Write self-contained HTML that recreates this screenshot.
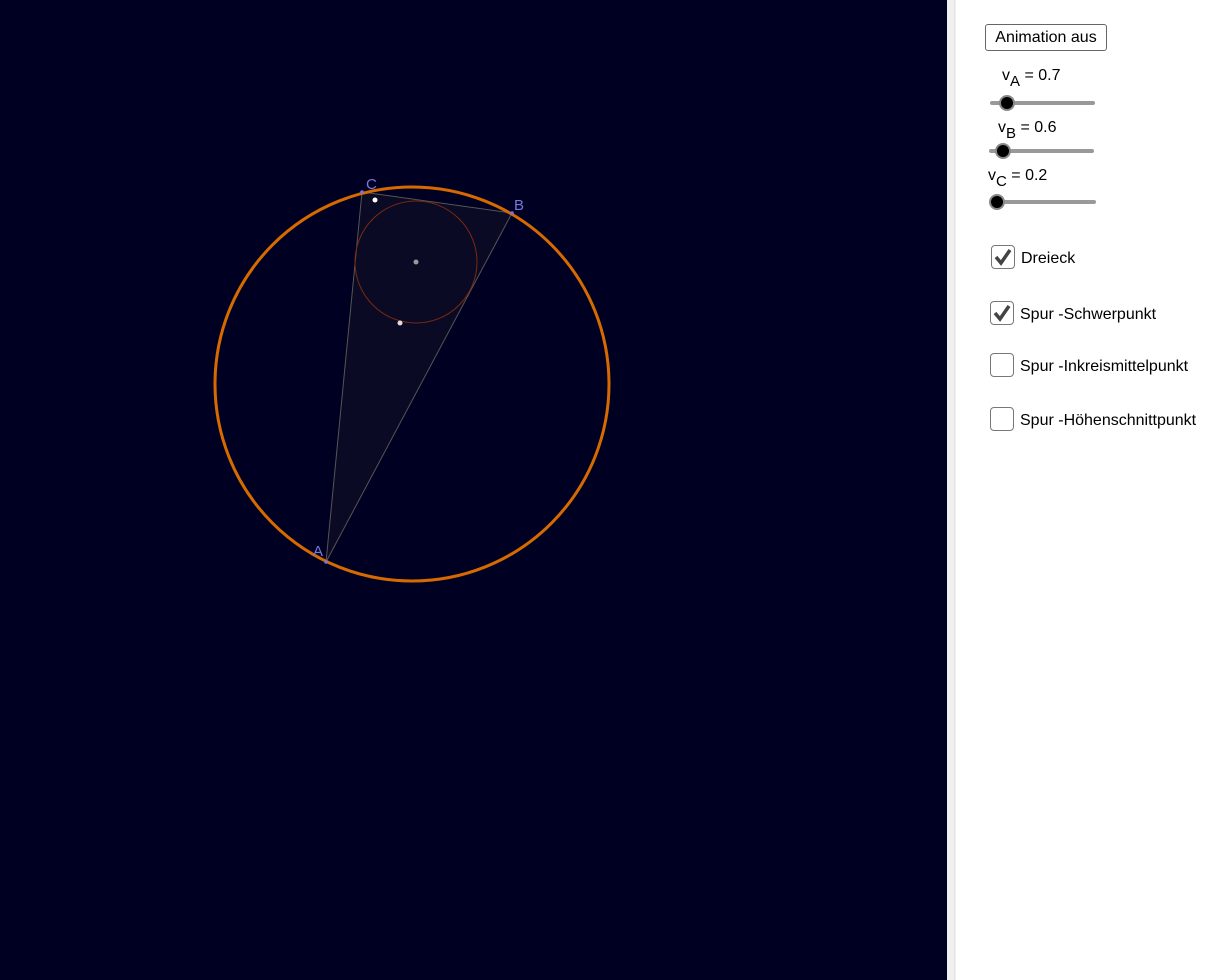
<!DOCTYPE html>
<html><head><style>
body{margin:0;width:1221px;height:980px;overflow:hidden;background:#fff;font-family:"Liberation Sans",sans-serif;position:relative}
.t{position:absolute;font-size:16px;color:#000;white-space:nowrap}
.cb{position:absolute;width:24px;height:24px;border:1.5px solid #777;border-radius:4px;box-sizing:border-box;background:#fff}
sub{font-size:15px;vertical-align:-6px;line-height:0}
</style></head><body>
<svg width="1221" height="980" style="position:absolute;left:0;top:0">
<rect x="0" y="0" width="947" height="980" fill="#000022"/>
<rect x="947" y="0" width="8" height="980" fill="#f0f0f0"/>
<line x1="955" y1="0" x2="955" y2="980" stroke="#ddd"/>
<polygon points="326,562 512,213 362,192" fill="#0a0a24" stroke="#555" stroke-width="1"/>
<circle cx="416" cy="262" r="61" fill="none" stroke="#7a2a10" stroke-width="1"/>
<circle cx="412" cy="384" r="197" fill="none" stroke="#d66a00" stroke-width="3"/>
<circle cx="375" cy="200" r="2.5" fill="#fff"/>
<circle cx="400" cy="323" r="2.5" fill="#ddd"/>
<circle cx="416" cy="262" r="2.5" fill="#999"/>
<circle cx="326" cy="562" r="1.8" fill="#7777dd"/>
<circle cx="512" cy="213" r="1.8" fill="#7777dd"/>
<circle cx="362" cy="192" r="1.8" fill="#7777dd"/>
<text x="313" y="556" fill="#7777dd" font-size="15" font-family="Liberation Sans">A</text>
<text x="514" y="210" fill="#7777dd" font-size="15" font-family="Liberation Sans">B</text>
<text x="366" y="189" fill="#7777dd" font-size="15" font-family="Liberation Sans">C</text>
<g stroke="#999" stroke-width="4" stroke-linecap="round">
<line x1="992" y1="103" x2="1093" y2="103"/>
<line x1="991" y1="151" x2="1092" y2="151"/>
<line x1="992" y1="202" x2="1094" y2="202"/>
</g>
<circle cx="1007" cy="103" r="7" fill="#000" stroke="#888" stroke-width="2"/>
<circle cx="1003" cy="151" r="7" fill="#000" stroke="#888" stroke-width="2"/>
<circle cx="997" cy="202" r="7" fill="#000" stroke="#888" stroke-width="2"/>
</svg>
<div style="position:absolute;left:985px;top:24px;width:122px;height:27px;border:1px solid #666;border-radius:3px;box-sizing:border-box;font-size:16px;text-align:center;line-height:25px">Animation aus</div>
<div class="t" style="left:1002px;top:67px">v<sub>A</sub> = 0.7</div>
<div class="t" style="left:998px;top:119px">v<sub>B</sub> = 0.6</div>
<div class="t" style="left:988px;top:167px">v<sub>C</sub> = 0.2</div>
<div class="cb" style="left:991px;top:245px"><svg width="22" height="22" style="position:absolute;left:0;top:0"><path d="M4 11 L9 17 L18 4" fill="none" stroke="#444" stroke-width="3.5"/></svg></div>
<div class="t" style="left:1021px;top:250px">Dreieck</div>
<div class="cb" style="left:990px;top:301px"><svg width="22" height="22" style="position:absolute;left:0;top:0"><path d="M4 11 L9 17 L18 4" fill="none" stroke="#444" stroke-width="3.5"/></svg></div>
<div class="t" style="left:1020px;top:306px">Spur -Schwerpunkt</div>
<div class="cb" style="left:990px;top:353px"></div>
<div class="t" style="left:1020px;top:358px">Spur -Inkreismittelpunkt</div>
<div class="cb" style="left:990px;top:407px"></div>
<div class="t" style="left:1020px;top:412px">Spur -Höhenschnittpunkt</div>
</body></html>
